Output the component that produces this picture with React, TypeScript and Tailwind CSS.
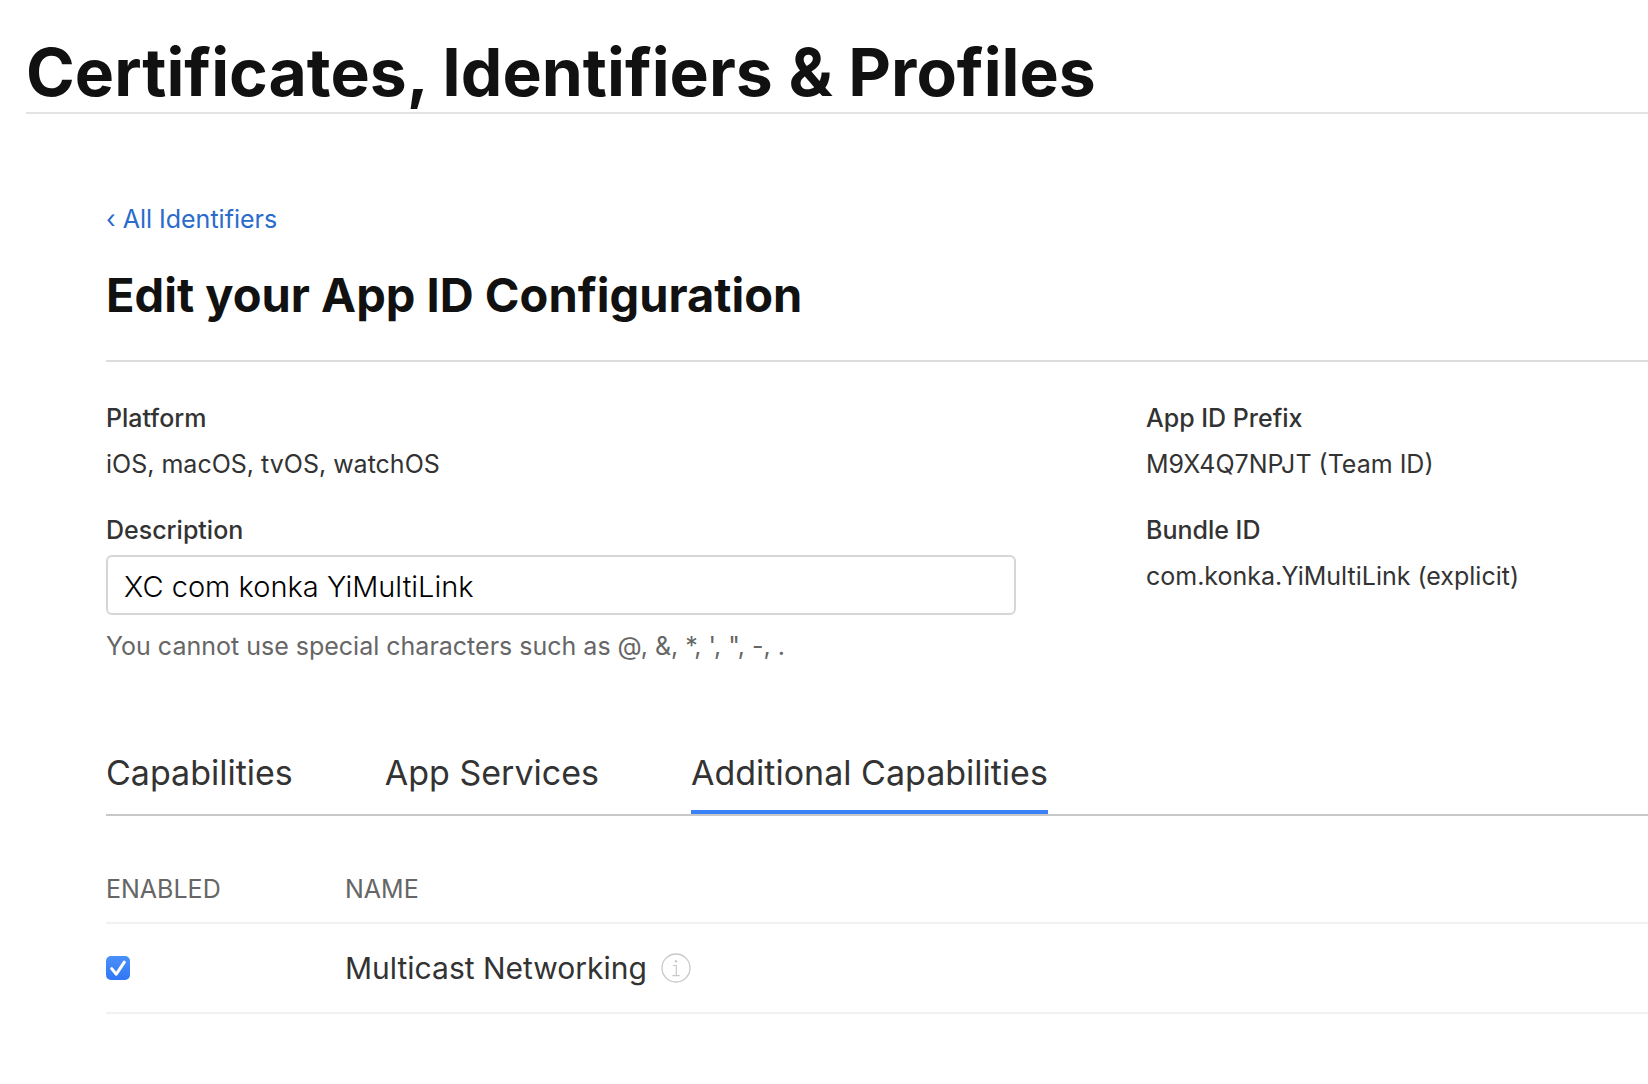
import { useState } from "react";

const tabs = ["Capabilities", "App Services", "Additional Capabilities"];

function Field({ label, value }: { label: string; value: string }) {
  return (
    <div>
      <dt className="font-medium">{label}</dt>
      <dd className="mt-3.5">{value}</dd>
    </div>
  );
}

function InfoIcon() {
  return (
    <svg width="30" height="30" viewBox="0 0 30 30" fill="none" stroke="#c8c8c8" aria-hidden="true">
      <circle cx="15" cy="15" r="14" strokeWidth="1.3" />
      <path d="M12 12.5h3.3v10M11.3 22.6h7.4" strokeWidth="1.2" />
      <circle cx="15" cy="8.2" r="1.2" fill="#c8c8c8" stroke="none" />
    </svg>
  );
}

function Checkbox({ id }: { id: string }) {
  const [checked, setChecked] = useState(true);
  return (
    <span className="grid size-6 place-items-center">
      <input
        id={id}
        type="checkbox"
        checked={checked}
        onChange={(e) => setChecked(e.target.checked)}
        className="col-start-1 row-start-1 size-6 appearance-none rounded-[5px] border border-gray-300 checked:border-0 checked:bg-linear-to-b checked:from-[#4a90f9] checked:to-[#3176f6]"
      />
      {checked && (
        <svg
          className="pointer-events-none col-start-1 row-start-1"
          width="24"
          height="24"
          viewBox="0 0 24 24"
          fill="none"
          stroke="white"
          strokeWidth="3"
          strokeLinecap="round"
          strokeLinejoin="round"
          aria-hidden="true"
        >
          <path d="M5.7 12.6l4.6 5.6L18.3 6.2" />
        </svg>
      )}
    </span>
  );
}

export default function App() {
  const [active, setActive] = useState("Additional Capabilities");
  const [description, setDescription] = useState("XC com konka YiMultiLink");

  return (
    <div className="min-h-screen overflow-x-hidden bg-white pl-[26px] font-['Inter',sans-serif] text-[25px] leading-8 text-[#333]">
      <header className="border-b-2 border-[#e3e3e3] pt-8">
        <h1 className="text-[66px] leading-[80px] font-bold text-[#111]">Certificates, Identifiers &amp; Profiles</h1>
      </header>

      <main className="pt-[89px] pb-16 pl-20">
        <a href="#identifiers" className="text-[#2a6bcb]">
          ‹ All Identifiers
        </a>
        <h2 className="mt-8 border-b-2 border-[#dcdcdc] pb-[37px] text-[47px] leading-[56px] font-bold text-[#111]">
          Edit your App ID Configuration
        </h2>

        <div className="mt-10 grid grid-cols-[2fr_1fr] gap-9">
          <div className="pr-[94px]">
            <dl>
              <Field label="Platform" value="iOS, macOS, tvOS, watchOS" />
            </dl>
            <label htmlFor="description" className="mt-[34px] block font-medium">
              Description
            </label>
            <input
              id="description"
              type="text"
              value={description}
              onChange={(e) => setDescription(e.target.value)}
              className="mt-[9px] block h-[60px] w-full rounded-md border-2 border-[#d6d6d6] bg-white px-4 pt-0.5 text-[29px] font-light text-black"
            />
            <p className="mt-[15px] text-[#666]">You cannot use special characters such as @, &amp;, *, ', ", -, .</p>
          </div>
          <dl className="flex flex-col gap-[34px]">
            <Field label="App ID Prefix" value="M9X4Q7NPJT (Team ID)" />
            <Field label="Bundle ID" value="com.konka.YiMultiLink (explicit)" />
          </dl>
        </div>

        <div role="tablist" className="mt-[89px] flex gap-[92px] border-b-2 border-[#c8c8c8]">
          {tabs.map((tab) => (
            <button
              key={tab}
              type="button"
              role="tab"
              aria-selected={tab === active}
              onClick={() => setActive(tab)}
              className={
                tab === active
                  ? "border-b-4 border-[#3b82f6] pb-[15px] text-[34px] leading-[44px]"
                  : "border-b-4 border-transparent pb-[15px] text-[34px] leading-[44px]"
              }
            >
              {tab}
            </button>
          ))}
        </div>

        <table className="mt-[57px] w-full table-fixed border-collapse text-left">
          <thead>
            <tr className="border-b-2 border-[#f2f2f2] text-[#666]">
              <th className="w-[239px] pb-[17px] font-normal">ENABLED</th>
              <th className="pb-[17px] font-normal">NAME</th>
            </tr>
          </thead>
          <tbody>
            <tr className="border-b-2 border-[#f2f2f2]">
              <td className="h-[90px]">
                <Checkbox id="multicast" />
              </td>
              <td className="h-[90px]">
                <div className="flex items-center gap-3.5">
                  <label htmlFor="multicast" className="text-[30px]">
                    Multicast Networking
                  </label>
                  <button type="button" aria-label="About Multicast Networking">
                    <InfoIcon />
                  </button>
                </div>
              </td>
            </tr>
          </tbody>
        </table>
      </main>
    </div>
  );
}
